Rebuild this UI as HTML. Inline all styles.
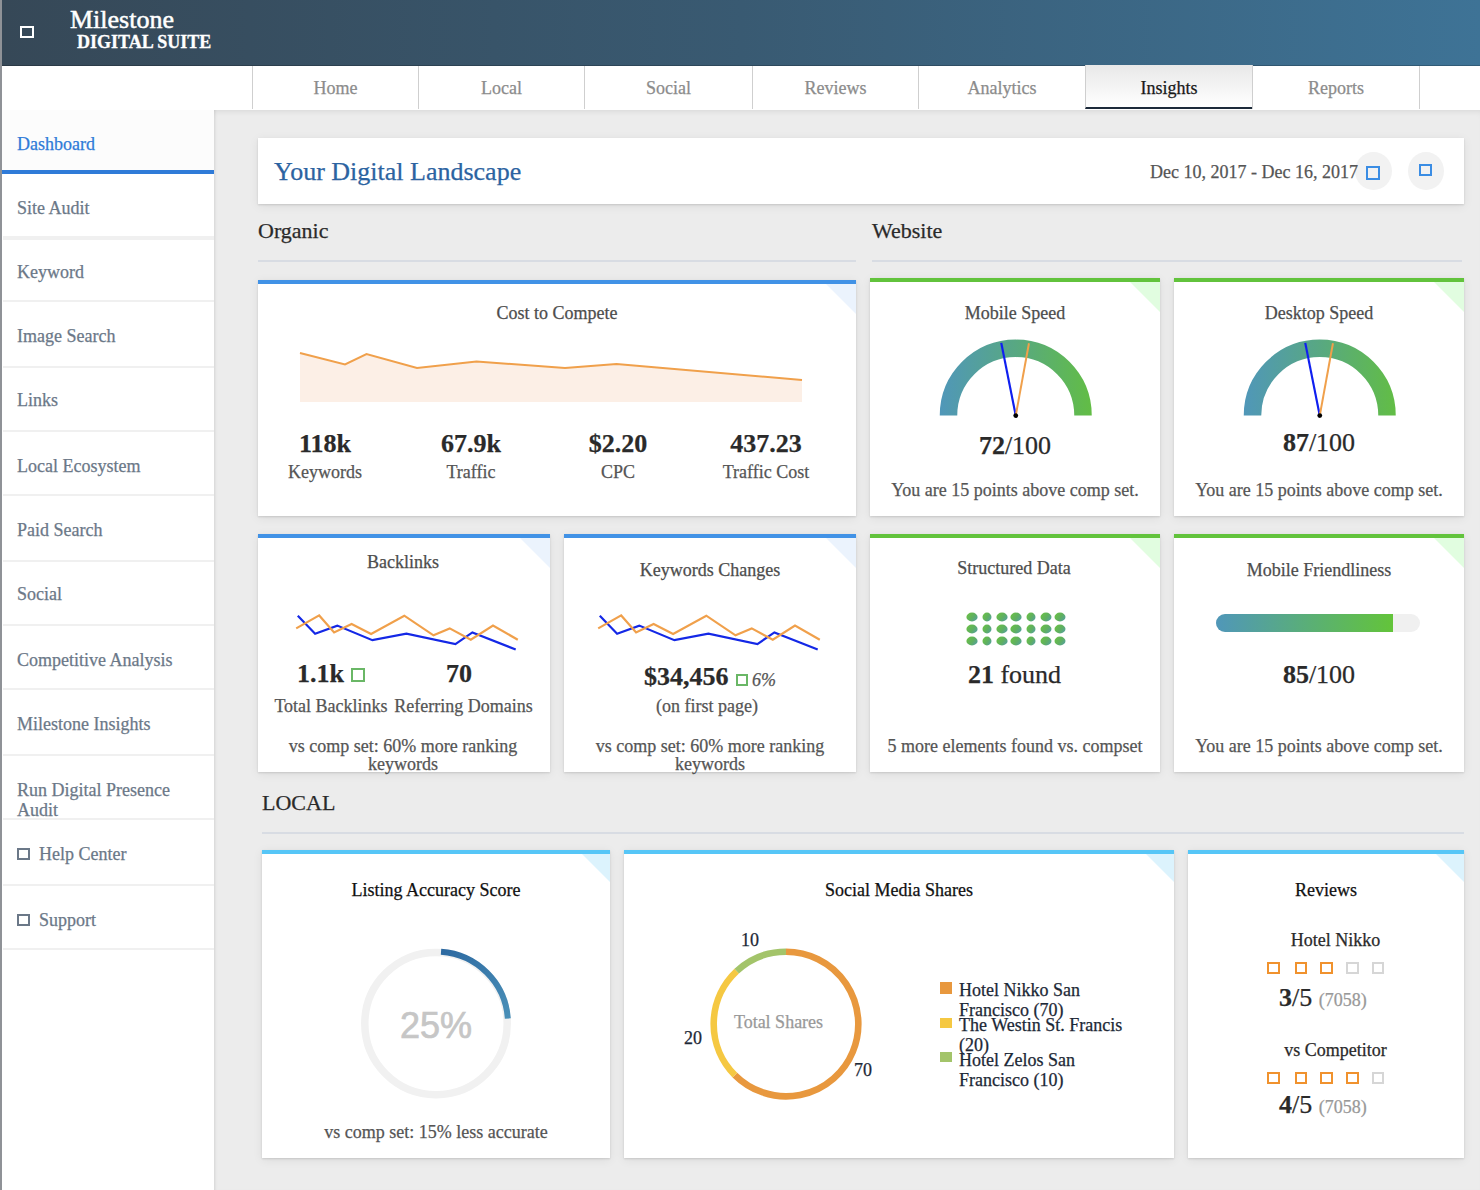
<!DOCTYPE html>
<html><head><meta charset="utf-8">
<style>
*{box-sizing:border-box;margin:0;padding:0}
html,body{width:1480px;height:1190px;overflow:hidden}
body{position:relative;background:#ececec;font-family:"Liberation Serif",serif;color:#333}
.t{position:absolute;white-space:nowrap;-webkit-text-stroke:0.25px currentColor}
.r{position:absolute}
.card{position:absolute;background:#fff;box-shadow:0 1px 2px rgba(0,0,0,.13),0 2px 10px rgba(0,0,0,.07)}
.card .tri{position:absolute;right:0;top:0;width:0;height:0;border-top:30px solid #ebf4fd;border-left:30px solid transparent}
.tab{position:absolute;-webkit-text-stroke:0.25px currentColor;top:66px;height:43px;border-left:1px solid #cfcfcf;font-size:18px;color:#8c8c8c;text-align:center;line-height:44px}
.tab.act{background:linear-gradient(#e8e8e8,#fff);color:#1a1a1a;border-right:1px solid #cfcfcf;border-bottom:2px solid #1c2a3a;height:44px;top:65px;line-height:46px}
svg{position:absolute;overflow:visible}
</style></head><body>

<div class="r" style="left:0px;top:0px;width:2px;height:1190px;background:#8f9297"></div>
<div class="r" style="left:2px;top:0px;width:1478px;height:66px;background:linear-gradient(to right,#364857 0%,#395a72 50%,#3e7396 100%);border-bottom:1px solid rgba(0,0,0,.2)"></div>
<div class="r" style="left:20px;top:26px;width:14px;height:12px;border:2px solid #fff"></div>
<div class="t" style="top:5px;font-size:26px;line-height:30px;color:#fff;font-family:'Liberation Serif',serif;left:70px;-webkit-text-stroke:0.5px #fff;">Milestone</div>
<div class="t" style="top:32px;font-size:18px;line-height:20px;color:#fff;font-family:'Liberation Serif',serif;font-weight:700;left:77px;-webkit-text-stroke:0.3px #fff;">DIGITAL SUITE</div>
<div class="r" style="left:2px;top:66px;width:1478px;height:44px;background:#fff"></div>
<div class="tab" style="left:252px;width:166px;">Home</div>
<div class="tab" style="left:418px;width:166px;">Local</div>
<div class="tab" style="left:584px;width:168px;">Social</div>
<div class="tab" style="left:752px;width:166px;">Reviews</div>
<div class="tab" style="left:918px;width:167px;">Analytics</div>
<div class="tab act" style="left:1085px;width:168px;">Insights</div>
<div class="tab" style="left:1252px;width:168px;border-right:1px solid #cfcfcf;">Reports</div>
<div class="r" style="left:2px;top:110px;width:212px;height:1080px;background:#fff"></div>
<div class="r" style="left:2px;top:110px;width:212px;height:60px;background:#fcfcfc"></div>
<div class="r" style="left:214px;top:110px;width:1266px;height:1080px;background:#ececec;box-shadow:inset 0 5px 6px -4px rgba(0,0,0,.09),inset 3px 0 3px -2px rgba(0,0,0,.10)"></div>
<div class="r" style="left:2px;top:170px;width:212px;height:4px;background:#2f7bd8"></div>
<div class="t" style="top:134px;font-size:18px;line-height:20px;color:#2f7bd8;font-family:'Liberation Serif',serif;left:17px;">Dashboard</div>
<div class="t" style="top:198px;font-size:18px;line-height:20px;color:#6b7888;font-family:'Liberation Serif',serif;left:17px;">Site Audit</div>
<div class="t" style="top:262px;font-size:18px;line-height:20px;color:#6b7888;font-family:'Liberation Serif',serif;left:17px;">Keyword</div>
<div class="t" style="top:326px;font-size:18px;line-height:20px;color:#6b7888;font-family:'Liberation Serif',serif;left:17px;">Image Search</div>
<div class="t" style="top:390px;font-size:18px;line-height:20px;color:#6b7888;font-family:'Liberation Serif',serif;left:17px;">Links</div>
<div class="t" style="top:456px;font-size:18px;line-height:20px;color:#6b7888;font-family:'Liberation Serif',serif;left:17px;">Local Ecosystem</div>
<div class="t" style="top:520px;font-size:18px;line-height:20px;color:#6b7888;font-family:'Liberation Serif',serif;left:17px;">Paid Search</div>
<div class="t" style="top:584px;font-size:18px;line-height:20px;color:#6b7888;font-family:'Liberation Serif',serif;left:17px;">Social</div>
<div class="t" style="top:650px;font-size:18px;line-height:20px;color:#6b7888;font-family:'Liberation Serif',serif;left:17px;">Competitive Analysis</div>
<div class="t" style="top:714px;font-size:18px;line-height:20px;color:#6b7888;font-family:'Liberation Serif',serif;left:17px;">Milestone Insights</div>
<div class="t" style="top:780px;font-size:18px;line-height:20px;color:#6b7888;font-family:'Liberation Serif',serif;left:17px;">Run Digital Presence</div>
<div class="t" style="top:800px;font-size:18px;line-height:20px;color:#6b7888;font-family:'Liberation Serif',serif;left:17px;">Audit</div>
<div class="r" style="left:17px;top:848px;width:13px;height:12px;border:2px solid #6b7888"></div>
<div class="t" style="top:844px;font-size:18px;line-height:20px;color:#6b7888;font-family:'Liberation Serif',serif;left:39px;">Help Center</div>
<div class="r" style="left:17px;top:914px;width:13px;height:12px;border:2px solid #6b7888"></div>
<div class="t" style="top:910px;font-size:18px;line-height:20px;color:#6b7888;font-family:'Liberation Serif',serif;left:39px;">Support</div>
<div class="r" style="left:3px;top:236px;width:211px;height:4px;background:#f0f0f0"></div>
<div class="r" style="left:3px;top:300px;width:211px;height:2px;background:#f0f0f0"></div>
<div class="r" style="left:3px;top:366px;width:211px;height:2px;background:#f0f0f0"></div>
<div class="r" style="left:3px;top:430px;width:211px;height:2px;background:#f0f0f0"></div>
<div class="r" style="left:3px;top:494px;width:211px;height:2px;background:#f0f0f0"></div>
<div class="r" style="left:3px;top:560px;width:211px;height:2px;background:#f0f0f0"></div>
<div class="r" style="left:3px;top:624px;width:211px;height:2px;background:#f0f0f0"></div>
<div class="r" style="left:3px;top:688px;width:211px;height:2px;background:#f0f0f0"></div>
<div class="r" style="left:3px;top:754px;width:211px;height:2px;background:#f0f0f0"></div>
<div class="r" style="left:3px;top:818px;width:211px;height:2px;background:#f0f0f0"></div>
<div class="r" style="left:3px;top:884px;width:211px;height:2px;background:#f0f0f0"></div>
<div class="r" style="left:3px;top:948px;width:211px;height:2px;background:#f0f0f0"></div>
<div class="card" style="left:258px;top:138px;width:1206px;height:66px"></div>
<div class="t" style="top:157px;font-size:26px;line-height:30px;color:#2c63a1;font-family:'Liberation Serif',serif;left:274px;">Your Digital Landscape</div>
<div class="r" style="left:1355px;top:152px;width:37px;height:38px;border-radius:50%;background:#f2f2f2"></div>
<div class="t" style="top:162px;font-size:18px;line-height:20px;color:#555;font-family:'Liberation Serif',serif;right:122px;text-align:right;">Dec 10, 2017 - Dec 16, 2017</div>
<div class="r" style="left:1365.5px;top:166px;width:14px;height:14px;border:2.5px solid #3b8de4"></div>
<div class="r" style="left:1408px;top:152px;width:36px;height:38px;border-radius:50%;background:#f2f2f2"></div>
<div class="r" style="left:1419px;top:164px;width:13px;height:12px;border:2.5px solid #3b8de4"></div>
<div class="t" style="top:218px;font-size:22px;line-height:26px;color:#2a2a2a;font-family:'Liberation Serif',serif;left:258px;">Organic</div>
<div class="r" style="left:258px;top:260px;width:598px;height:2px;background:#d8dce3"></div>
<div class="t" style="top:218px;font-size:22px;line-height:26px;color:#2a2a2a;font-family:'Liberation Serif',serif;left:872px;">Website</div>
<div class="r" style="left:872px;top:260px;width:590px;height:2px;background:#d8dce3"></div>
<div class="t" style="top:790px;font-size:22px;line-height:26px;color:#2a2a2a;font-family:'Liberation Serif',serif;left:262px;">LOCAL</div>
<div class="r" style="left:262px;top:832px;width:1202px;height:2px;background:#d8dce3"></div>
<div class="card" style="left:258px;top:280px;width:598px;height:236px;border-top:4px solid #4192e6"><div class="tri" style="border-top:30px solid #ebf3fd;border-left-width:30px"></div></div>
<div class="card" style="left:870px;top:278px;width:290px;height:238px;border-top:4px solid #62c33c"><div class="tri" style="border-top:30px solid #e1fde0;border-left-width:30px"></div></div>
<div class="card" style="left:1174px;top:278px;width:290px;height:238px;border-top:4px solid #62c33c"><div class="tri" style="border-top:30px solid #e1fde0;border-left-width:30px"></div></div>
<div class="card" style="left:258px;top:534px;width:292px;height:238px;border-top:4px solid #4192e6"><div class="tri" style="border-top:30px solid #ebf3fd;border-left-width:30px"></div></div>
<div class="card" style="left:564px;top:534px;width:292px;height:238px;border-top:4px solid #4192e6"><div class="tri" style="border-top:30px solid #ebf3fd;border-left-width:30px"></div></div>
<div class="card" style="left:870px;top:534px;width:290px;height:238px;border-top:4px solid #62c33c"><div class="tri" style="border-top:30px solid #e1fde0;border-left-width:30px"></div></div>
<div class="card" style="left:1174px;top:534px;width:290px;height:238px;border-top:4px solid #62c33c"><div class="tri" style="border-top:30px solid #e1fde0;border-left-width:30px"></div></div>
<div class="card" style="left:262px;top:850px;width:348px;height:308px;border-top:4px solid #56c6f7"><div class="tri" style="border-top:28px solid #dcf3fd;border-left-width:28px"></div></div>
<div class="card" style="left:624px;top:850px;width:550px;height:308px;border-top:4px solid #56c6f7"><div class="tri" style="border-top:28px solid #dcf3fd;border-left-width:28px"></div></div>
<div class="card" style="left:1188px;top:850px;width:276px;height:308px;border-top:4px solid #56c6f7"><div class="tri" style="border-top:28px solid #dcf3fd;border-left-width:28px"></div></div>
<div class="t" style="top:303px;font-size:18px;line-height:20px;color:#4d4d4d;font-family:'Liberation Serif',serif;left:257px;width:600px;text-align:center;">Cost to Compete</div>
<svg style="left:0;top:0" width="1480" height="1190"><polygon points="300,402 300,353 345,364.5 366.5,354 417,368 476.5,361.5 565,368 616.5,364 802,380 802,402" fill="#fcefe6"/><polyline points="300,353 345,364.5 366.5,354 417,368 476.5,361.5 565,368 616.5,364 802,380" fill="none" stroke="#f0a04b" stroke-width="2"/></svg>
<div class="t" style="top:429px;font-size:26px;line-height:30px;color:#2a2a2a;font-family:'Liberation Serif',serif;font-weight:700;left:25px;width:600px;text-align:center;">118k</div>
<div class="t" style="top:462px;font-size:18px;line-height:20px;color:#555;font-family:'Liberation Serif',serif;left:25px;width:600px;text-align:center;">Keywords</div>
<div class="t" style="top:429px;font-size:26px;line-height:30px;color:#2a2a2a;font-family:'Liberation Serif',serif;font-weight:700;left:171px;width:600px;text-align:center;">67.9k</div>
<div class="t" style="top:462px;font-size:18px;line-height:20px;color:#555;font-family:'Liberation Serif',serif;left:171px;width:600px;text-align:center;">Traffic</div>
<div class="t" style="top:429px;font-size:26px;line-height:30px;color:#2a2a2a;font-family:'Liberation Serif',serif;font-weight:700;left:318px;width:600px;text-align:center;">$2.20</div>
<div class="t" style="top:462px;font-size:18px;line-height:20px;color:#555;font-family:'Liberation Serif',serif;left:318px;width:600px;text-align:center;">CPC</div>
<div class="t" style="top:429px;font-size:26px;line-height:30px;color:#2a2a2a;font-family:'Liberation Serif',serif;font-weight:700;left:466px;width:600px;text-align:center;">437.23</div>
<div class="t" style="top:462px;font-size:18px;line-height:20px;color:#555;font-family:'Liberation Serif',serif;left:466px;width:600px;text-align:center;">Traffic Cost</div>
<svg style="left:0;top:0" width="1480" height="1190"><defs><linearGradient id="g1015.75" gradientUnits="userSpaceOnUse" x1="939.75" y1="0" x2="1091.75" y2="0"><stop offset="0" stop-color="#5097b9"/><stop offset="0.5" stop-color="#58a882"/><stop offset="1" stop-color="#62bd45"/></linearGradient></defs><path d="M948.5,415.6 A67.25,67.25 0 0 1 1083.0,415.6" fill="none" stroke="url(#g1015.75)" stroke-width="17.5"/><line x1="1015.75" y1="415.6" x2="1001.25" y2="342.90000000000003" stroke="#0f1ff0" stroke-width="2.2"/><line x1="1015.75" y1="415.6" x2="1028.95" y2="343.20000000000005" stroke="#f0a04b" stroke-width="2"/><circle cx="1015.75" cy="415.6" r="2.4" fill="#000"/></svg>
<svg style="left:0;top:0" width="1480" height="1190"><defs><linearGradient id="g1319.75" gradientUnits="userSpaceOnUse" x1="1243.75" y1="0" x2="1395.75" y2="0"><stop offset="0" stop-color="#5097b9"/><stop offset="0.5" stop-color="#58a882"/><stop offset="1" stop-color="#62bd45"/></linearGradient></defs><path d="M1252.5,415.6 A67.25,67.25 0 0 1 1387.0,415.6" fill="none" stroke="url(#g1319.75)" stroke-width="17.5"/><line x1="1319.75" y1="415.6" x2="1305.25" y2="342.90000000000003" stroke="#0f1ff0" stroke-width="2.2"/><line x1="1319.75" y1="415.6" x2="1332.95" y2="343.20000000000005" stroke="#f0a04b" stroke-width="2"/><circle cx="1319.75" cy="415.6" r="2.4" fill="#000"/></svg>
<div class="t" style="top:303px;font-size:18px;line-height:20px;color:#4d4d4d;font-family:'Liberation Serif',serif;left:715px;width:600px;text-align:center;">Mobile Speed</div>
<div class="t" style="top:303px;font-size:18px;line-height:20px;color:#4d4d4d;font-family:'Liberation Serif',serif;left:1019px;width:600px;text-align:center;">Desktop Speed</div>
<div class="t" style="top:431px;font-size:26px;line-height:30px;color:#2a2a2a;font-family:'Liberation Serif',serif;left:715px;width:600px;text-align:center;"><b>72</b>/100</div>
<div class="t" style="top:428px;font-size:26px;line-height:30px;color:#2a2a2a;font-family:'Liberation Serif',serif;left:1019px;width:600px;text-align:center;"><b>87</b>/100</div>
<div class="t" style="top:480px;font-size:18px;line-height:20px;color:#555;font-family:'Liberation Serif',serif;left:715px;width:600px;text-align:center;">You are 15 points above comp set.</div>
<div class="t" style="top:480px;font-size:18px;line-height:20px;color:#555;font-family:'Liberation Serif',serif;left:1019px;width:600px;text-align:center;">You are 15 points above comp set.</div>
<svg style="left:0;top:0" width="1480" height="1190"><polyline points="297.8,615.7 315.1,633.7 337.3,625.6 372.4,640.2 406.4,633.7 455.4,644.1 472.4,632.4 515.7,649.5" fill="none" stroke="#1428e6" stroke-width="2.2"/><polyline points="296.2,628.4 319.2,615.4 334.1,632.4 351.6,624 371.1,634 404.3,615.7 433.5,635.3 449.7,628.4 470.8,639.7 493.0,625.6 517.8,639.7" fill="none" stroke="#f0a04b" stroke-width="2.2"/></svg>
<svg style="left:0;top:0" width="1480" height="1190"><polyline points="599.8,615.7 617.1,633.7 639.3,625.6 674.4,640.2 708.4,633.7 757.4,644.1 774.4,632.4 817.7,649.5" fill="none" stroke="#1428e6" stroke-width="2.2"/><polyline points="598.2,628.4 621.2,615.4 636.1,632.4 653.6,624 673.1,634 706.3,615.7 735.5,635.3 751.7,628.4 772.8,639.7 795.0,625.6 819.8,639.7" fill="none" stroke="#f0a04b" stroke-width="2.2"/></svg>
<div class="t" style="top:552px;font-size:18px;line-height:20px;color:#4d4d4d;font-family:'Liberation Serif',serif;left:103px;width:600px;text-align:center;">Backlinks</div>
<div class="t" style="top:659px;font-size:26px;line-height:30px;color:#2a2a2a;font-family:'Liberation Serif',serif;font-weight:700;left:297px;">1.1k</div>
<div class="r" style="left:350.5px;top:668px;width:14px;height:13.5px;border:2px solid #6ab766"></div>
<div class="t" style="top:659px;font-size:26px;line-height:30px;color:#2a2a2a;font-family:'Liberation Serif',serif;font-weight:700;left:159px;width:600px;text-align:center;">70</div>
<div class="t" style="top:696px;font-size:18px;line-height:20px;color:#555;font-family:'Liberation Serif',serif;left:31px;width:600px;text-align:center;">Total Backlinks</div>
<div class="t" style="top:696px;font-size:18px;line-height:20px;color:#555;font-family:'Liberation Serif',serif;left:163.5px;width:600px;text-align:center;">Referring Domains</div>
<div class="t" style="top:736px;font-size:18px;line-height:20px;color:#555;font-family:'Liberation Serif',serif;left:103px;width:600px;text-align:center;">vs comp set: 60% more ranking</div>
<div class="t" style="top:754px;font-size:18px;line-height:20px;color:#555;font-family:'Liberation Serif',serif;left:103px;width:600px;text-align:center;">keywords</div>
<div class="t" style="top:560px;font-size:18px;line-height:20px;color:#4d4d4d;font-family:'Liberation Serif',serif;left:410px;width:600px;text-align:center;">Keywords Changes</div>
<div class="t" style="top:662px;font-size:26px;line-height:30px;color:#2a2a2a;font-family:'Liberation Serif',serif;font-weight:700;left:644px;">$34,456</div>
<div class="r" style="left:735.5px;top:674px;width:12.5px;height:12px;border:2px solid #6ab766"></div>
<div class="t" style="top:670px;font-size:18px;line-height:20px;color:#555;font-family:'Liberation Serif',serif;left:752px;font-style:italic;">6%</div>
<div class="t" style="top:696px;font-size:18px;line-height:20px;color:#555;font-family:'Liberation Serif',serif;left:407px;width:600px;text-align:center;">(on first page)</div>
<div class="t" style="top:736px;font-size:18px;line-height:20px;color:#555;font-family:'Liberation Serif',serif;left:410px;width:600px;text-align:center;">vs comp set: 60% more ranking</div>
<div class="t" style="top:754px;font-size:18px;line-height:20px;color:#555;font-family:'Liberation Serif',serif;left:410px;width:600px;text-align:center;">keywords</div>
<div class="t" style="top:558px;font-size:18px;line-height:20px;color:#4d4d4d;font-family:'Liberation Serif',serif;left:714px;width:600px;text-align:center;">Structured Data</div>
<svg style="left:0;top:0" width="1480" height="1190"><defs><linearGradient id="dg" x1="0" y1="0.2" x2="1" y2="0.8"><stop offset="0" stop-color="#6ac045"/><stop offset="0.55" stop-color="#5fb060"/><stop offset="1" stop-color="#55a0a0"/></linearGradient></defs><ellipse cx="972" cy="617" rx="5.6" ry="4.4" fill="url(#dg)"/><ellipse cx="987" cy="617" rx="4.5" ry="4.4" fill="url(#dg)"/><ellipse cx="1002" cy="617" rx="5.6" ry="4.4" fill="url(#dg)"/><ellipse cx="1016" cy="617" rx="5.6" ry="4.4" fill="url(#dg)"/><ellipse cx="1031" cy="617" rx="4.5" ry="4.4" fill="url(#dg)"/><ellipse cx="1046" cy="617" rx="5.5" ry="4.4" fill="url(#dg)"/><ellipse cx="1060" cy="617" rx="5.5" ry="4.4" fill="url(#dg)"/><ellipse cx="972" cy="629" rx="5.6" ry="4.4" fill="url(#dg)"/><ellipse cx="987" cy="629" rx="4.5" ry="4.4" fill="url(#dg)"/><ellipse cx="1002" cy="629" rx="5.6" ry="4.4" fill="url(#dg)"/><ellipse cx="1016" cy="629" rx="5.6" ry="4.4" fill="url(#dg)"/><ellipse cx="1031" cy="629" rx="4.5" ry="4.4" fill="url(#dg)"/><ellipse cx="1046" cy="629" rx="5.5" ry="4.4" fill="url(#dg)"/><ellipse cx="1060" cy="629" rx="5.5" ry="4.4" fill="url(#dg)"/><ellipse cx="972" cy="641" rx="5.6" ry="4.4" fill="url(#dg)"/><ellipse cx="987" cy="641" rx="4.5" ry="4.4" fill="url(#dg)"/><ellipse cx="1002" cy="641" rx="5.6" ry="4.4" fill="url(#dg)"/><ellipse cx="1016" cy="641" rx="5.6" ry="4.4" fill="url(#dg)"/><ellipse cx="1031" cy="641" rx="4.5" ry="4.4" fill="url(#dg)"/><ellipse cx="1046" cy="641" rx="5.5" ry="4.4" fill="url(#dg)"/><ellipse cx="1060" cy="641" rx="5.5" ry="4.4" fill="url(#dg)"/></svg>
<div class="t" style="top:660px;font-size:26px;line-height:30px;color:#2a2a2a;font-family:'Liberation Serif',serif;left:714.5px;width:600px;text-align:center;"><b>21</b> found</div>
<div class="t" style="top:736px;font-size:18px;line-height:20px;color:#555;font-family:'Liberation Serif',serif;left:715px;width:600px;text-align:center;">5 more elements found vs. compset</div>
<div class="t" style="top:560px;font-size:18px;line-height:20px;color:#4d4d4d;font-family:'Liberation Serif',serif;left:1019px;width:600px;text-align:center;">Mobile Friendliness</div>
<div class="r" style="left:1215.5px;top:614px;width:204.5px;height:18px;border-radius:9px;background:#f0f0f0;overflow:hidden"></div>
<div class="r" style="left:1215.5px;top:614px;width:177px;height:18px;border-radius:9px 0 0 9px;background:linear-gradient(to right,#5097b9,#63c43a)"></div>
<div class="t" style="top:660px;font-size:26px;line-height:30px;color:#2a2a2a;font-family:'Liberation Serif',serif;left:1019px;width:600px;text-align:center;"><b>85</b>/100</div>
<div class="t" style="top:736px;font-size:18px;line-height:20px;color:#555;font-family:'Liberation Serif',serif;left:1019px;width:600px;text-align:center;">You are 15 points above comp set.</div>
<div class="t" style="top:880px;font-size:18px;line-height:20px;color:#111;font-family:'Liberation Serif',serif;left:136px;width:600px;text-align:center;">Listing Accuracy Score</div>
<svg style="left:0;top:0" width="1480" height="1190"><defs><linearGradient id="lg" gradientUnits="userSpaceOnUse" x1="436" y1="952.4" x2="507.2" y2="1023.6"><stop offset="0" stop-color="#2c68a0"/><stop offset="1" stop-color="#4a90b8"/></linearGradient></defs><circle cx="436" cy="1023.6" r="71.2" fill="none" stroke="#f1f1f1" stroke-width="7.5"/><path d="M441.02,951.78 A72,72 0 0 1 507.82,1018.58" fill="none" stroke="url(#lg)" stroke-width="6"/></svg>
<div class="t" style="top:1006px;font-size:36px;line-height:40px;color:#c6c6c6;font-family:'Liberation Sans',sans-serif;left:136px;width:600px;text-align:center;-webkit-text-stroke:0.7px #c6c6c6;">25%</div>
<div class="t" style="top:1122px;font-size:18px;line-height:20px;color:#555;font-family:'Liberation Serif',serif;left:136px;width:600px;text-align:center;">vs comp set: 15% less accurate</div>
<div class="t" style="top:880px;font-size:18px;line-height:20px;color:#111;font-family:'Liberation Serif',serif;left:599px;width:600px;text-align:center;">Social Media Shares</div>
<svg style="left:0;top:0" width="1480" height="1190"><path d="M786.00,951.70 A72.3,72.3 0 1 1 734.88,1075.12" fill="none" stroke="#e8983e" stroke-width="6.6"/><path d="M734.88,1075.12 A72.3,72.3 0 0 1 736.69,971.12" fill="none" stroke="#f5c842" stroke-width="6.6"/><path d="M736.69,971.12 A72.3,72.3 0 0 1 786.00,951.70" fill="none" stroke="#a3c46a" stroke-width="6.6"/></svg>
<div class="t" style="top:930px;font-size:18px;line-height:20px;color:#1c2836;font-family:'Liberation Serif',serif;left:450px;width:600px;text-align:center;">10</div>
<div class="t" style="top:1028px;font-size:18px;line-height:20px;color:#1c2836;font-family:'Liberation Serif',serif;left:393px;width:600px;text-align:center;">20</div>
<div class="t" style="top:1060px;font-size:18px;line-height:20px;color:#1c2836;font-family:'Liberation Serif',serif;left:563px;width:600px;text-align:center;">70</div>
<div class="t" style="top:1012px;font-size:18px;line-height:20px;color:#999;font-family:'Liberation Serif',serif;left:478.5px;width:600px;text-align:center;">Total Shares</div>
<div class="r" style="left:940px;top:982px;width:12px;height:12px;background:#e8983e"></div>
<div class="r" style="left:940px;top:1018px;width:12px;height:10px;background:#f5c842"></div>
<div class="r" style="left:940px;top:1052px;width:12px;height:10px;background:#a3c46a"></div>
<div class="t" style="top:980px;font-size:18px;line-height:20px;color:#1c2836;font-family:'Liberation Serif',serif;left:959px;">Hotel Nikko San</div>
<div class="t" style="top:1000px;font-size:18px;line-height:20px;color:#1c2836;font-family:'Liberation Serif',serif;left:959px;">Francisco (70)</div>
<div class="t" style="top:1015px;font-size:18px;line-height:20px;color:#1c2836;font-family:'Liberation Serif',serif;left:959px;">The Westin St. Francis</div>
<div class="t" style="top:1035px;font-size:18px;line-height:20px;color:#1c2836;font-family:'Liberation Serif',serif;left:959px;">(20)</div>
<div class="t" style="top:1050px;font-size:18px;line-height:20px;color:#1c2836;font-family:'Liberation Serif',serif;left:959px;">Hotel Zelos San</div>
<div class="t" style="top:1070px;font-size:18px;line-height:20px;color:#1c2836;font-family:'Liberation Serif',serif;left:959px;">Francisco (10)</div>
<div class="t" style="top:880px;font-size:18px;line-height:20px;color:#111;font-family:'Liberation Serif',serif;left:1026px;width:600px;text-align:center;">Reviews</div>
<div class="t" style="top:930px;font-size:18px;line-height:20px;color:#2a2a2a;font-family:'Liberation Serif',serif;left:1035.5px;width:600px;text-align:center;">Hotel Nikko</div>
<div class="r" style="left:1267px;top:962px;width:12.5px;height:11.5px;border:2px solid #f0922e"></div>
<div class="r" style="left:1294.5px;top:962px;width:12.5px;height:11.5px;border:2px solid #f0922e"></div>
<div class="r" style="left:1320px;top:962px;width:12.5px;height:11.5px;border:2px solid #f0922e"></div>
<div class="r" style="left:1346px;top:962px;width:12.5px;height:11.5px;border:2px solid #d6d6d6"></div>
<div class="r" style="left:1371.5px;top:962px;width:12.5px;height:11.5px;border:2px solid #d6d6d6"></div>
<div class="t" style="top:983px;font-size:26px;line-height:30px;color:#2a2a2a;font-family:'Liberation Serif',serif;left:1279px;"><b>3</b>/5 <span style="font-size:18px;color:#999">(7058)</span></div>
<div class="t" style="top:1040px;font-size:18px;line-height:20px;color:#2a2a2a;font-family:'Liberation Serif',serif;left:1035.5px;width:600px;text-align:center;">vs Competitor</div>
<div class="r" style="left:1267px;top:1072px;width:12.5px;height:11.5px;border:2px solid #f0922e"></div>
<div class="r" style="left:1294.5px;top:1072px;width:12.5px;height:11.5px;border:2px solid #f0922e"></div>
<div class="r" style="left:1320px;top:1072px;width:12.5px;height:11.5px;border:2px solid #f0922e"></div>
<div class="r" style="left:1346px;top:1072px;width:12.5px;height:11.5px;border:2px solid #f0922e"></div>
<div class="r" style="left:1371.5px;top:1072px;width:12.5px;height:11.5px;border:2px solid #d6d6d6"></div>
<div class="t" style="top:1090px;font-size:26px;line-height:30px;color:#2a2a2a;font-family:'Liberation Serif',serif;left:1279px;"><b>4</b>/5 <span style="font-size:18px;color:#999">(7058)</span></div>
</body></html>
